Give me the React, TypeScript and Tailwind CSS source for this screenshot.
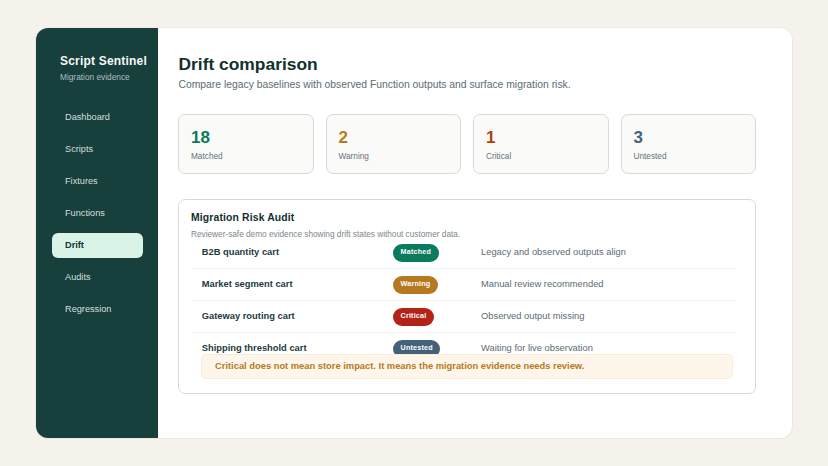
import React from 'react';

const NAV_ITEMS = ['Dashboard', 'Scripts', 'Fixtures', 'Functions', 'Drift', 'Audits', 'Regression'];

const STATS = [
  { value: '18', label: 'Matched', color: 'text-[#0b7a5e]' },
  { value: '2', label: 'Warning', color: 'text-[#b7791f]' },
  { value: '1', label: 'Critical', color: 'text-[#b4400f]' },
  { value: '3', label: 'Untested', color: 'text-[#44617b]' },
];

const ROWS = [
  { name: 'B2B quantity cart', status: 'Matched', badge: 'bg-[#0b7a5e]', note: 'Legacy and observed outputs align' },
  { name: 'Market segment cart', status: 'Warning', badge: 'bg-[#b7791f]', note: 'Manual review recommended' },
  { name: 'Gateway routing cart', status: 'Critical', badge: 'bg-[#b42318]', note: 'Observed output missing' },
  { name: 'Shipping threshold cart', status: 'Untested', badge: 'bg-[#44617b]', note: 'Waiting for live observation' },
];

const App: React.FC = () => {
  return (
    <div className="min-h-[466px] bg-[#f5f2ec] pt-[28px] pl-[36px] pr-[36px] font-['Liberation_Sans',Arial,sans-serif]">
      <div className="flex h-[410px] overflow-hidden rounded-[12px] bg-white shadow-[0_0_0_1px_#ebe9e5]">
        {/* Sidebar */}
        <aside className="w-[122px] shrink-0 bg-[#173f3c] pt-[26px]">
          <div className="pl-[24px]">
            <div className="text-[12px] leading-[15px] font-bold tracking-[0.2px] whitespace-nowrap text-[#f6f8f6]">Script Sentinel</div>
            <div className="mt-[3px] text-[8.3px] leading-[11px] text-[#aebfc0]">Migration evidence</div>
          </div>
          <nav className="mt-[22px] flex flex-col gap-[7px] pl-[16px] pr-[15px]">
            {NAV_ITEMS.map((item) => (
              <div
                key={item}
                className={`flex h-[25px] items-center rounded-[6px] pl-[13px] text-[9.2px] ${item === 'Drift' ? 'bg-[#d9f4e7] font-bold text-[#143532]' : 'text-[#d5dfdd]'}`}
              >
                {item}
              </div>
            ))}
          </nav>
        </aside>

        {/* Main */}
        <main className="min-w-0 flex-1 pt-[26px] pl-[20px] pr-[36px]">
          <h1 className="pl-[0.5px] text-[17.4px] leading-[21px] font-bold text-[#12302e]">Drift comparison</h1>
          <p className="mt-[3px] pl-[0.5px] text-[10.35px] leading-[14px] text-[#5c6b73]">
            Compare legacy baselines with observed Function outputs and surface migration risk.
          </p>

          <div className="mt-[22px] grid grid-cols-4 gap-[12px]">
            {STATS.map((stat) => (
              <div key={stat.label} className="h-[60px] rounded-[7px] border border-[#d9d9d5] bg-[#fafaf8] pt-[13px] pl-[12px]">
                <div className={`text-[17px] leading-[20px] font-bold ${stat.color}`}>{stat.value}</div>
                <div className="mt-[3px] text-[8.25px] leading-[11px] text-[#66737b]">{stat.label}</div>
              </div>
            ))}
          </div>

          <section className="mt-[25px] h-[195px] rounded-[7px] border border-[#d9d9d5] bg-white pt-[11px] pl-[12px] pr-[12px]">
            <h2 className="text-[10.4px] leading-[13px] font-bold tracking-[0.14px] text-[#12302e]">Migration Risk Audit</h2>
            <p className="mt-[5px] text-[8.25px] leading-[11px] text-[#7c878d]">
              Reviewer-safe demo evidence showing drift states without customer data.
            </p>
            <div className="flex flex-col pr-[7px]">
              {ROWS.map((row, idx) => (
                <div key={row.name} className={`flex h-[32px] items-center border-b pl-[10px] ${idx === 0 ? '-mt-[3px]' : ''} ${idx < 3 ? 'border-[#f3f3f1]' : 'border-transparent'}`}>
                  <div className="w-[192px] shrink-0 pl-[0.7px] text-[9.35px] font-bold whitespace-nowrap text-[#1d3a40]">{row.name}</div>
                  <div className="flex w-[88px] shrink-0">
                    <span className={`flex h-[18px] items-center rounded-full px-[7.5px] text-[7.2px] font-bold tracking-[0.2px] text-white ${row.badge}`}>
                      {row.status}
                    </span>
                  </div>
                  <div className="text-[9.35px] text-[#5c6b73]">{row.note}</div>
                </div>
              ))}
            </div>
            <div className="relative z-10 mt-[-11px] ml-[10px] mr-[10px] flex h-[25px] items-center rounded-[5px] border border-[#fcecd6] bg-[#fef6ea] pl-[13px] text-[9.35px] font-bold text-[#b7791f]">
              Critical does not mean store impact. It means the migration evidence needs review.
            </div>
          </section>
        </main>
      </div>
    </div>
  );
};

export default App;
